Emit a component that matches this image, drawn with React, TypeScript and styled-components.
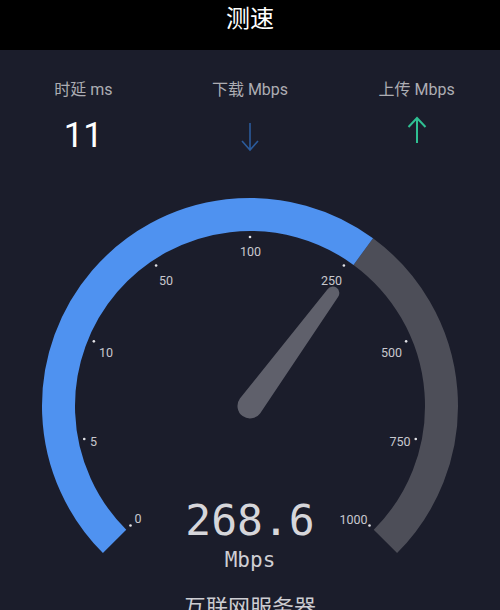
import React from "react";
import styled, { createGlobalStyle } from "styled-components";

const GlobalStyle = createGlobalStyle`
    html, body {
        margin: 0;
        padding: 0;
        background: #1b1d2b;
        overflow: hidden;
    }
    body {
        font-family: Roboto, "Noto Sans CJK SC", sans-serif;
    }
`;

const Screen = styled.div`
    width: 500px;
    height: 610px;
    display: flex;
    flex-direction: column;
    background: #1b1d2b;
    overflow: hidden;
`;

const Header = styled.div`
    height: 50px;
    flex-shrink: 0;
    background: #000;
    color: #fff;
    font-family: "Noto Sans CJK SC", sans-serif;
    font-size: 24px;
    line-height: 34px;
    text-align: center;
`;

const Stats = styled.div`
    display: grid;
    grid-template-columns: 1fr 1fr 1fr;
    padding-top: 30px;
`;

const Stat = styled.div`
    display: flex;
    flex-direction: column;
    align-items: center;
    gap: 16px;
`;

const StatLabel = styled.div`
    font-size: 16px;
    line-height: 20px;
    color: #adadb3;
    white-space: nowrap;
`;

const StatValue = styled.div`
    height: 40px;
    font-size: 35px;
    line-height: 40px;
    font-weight: 400;
    color: #fff;
`;

const ArrowIcon = styled.svg`
    display: block;
    width: 24px;
    height: 40px;
`;

const Gauge = styled.div`
    position: relative;
    height: 434px;
    flex-shrink: 0;
`;

const Dial = styled.svg`
    display: block;
    width: 500px;
    height: 434px;
`;

const Readout = styled.div`
    position: absolute;
    top: 343px;
    left: 0;
    right: 0;
    display: flex;
    flex-direction: column;
    align-items: center;
    font-family: "DejaVu Sans Mono", monospace;
    color: #d6d6da;
`;

const Speed = styled.div`
    font-size: 43px;
    line-height: 43px;
`;

const Unit = styled.div`
    margin-top: 8px;
    font-size: 21px;
    line-height: 21px;
    color: #cfcfd4;
`;

const Server = styled.div`
    text-align: center;
    font-family: "Noto Sans CJK SC", sans-serif;
    font-size: 22px;
    line-height: 30px;
    color: #cdcdd2;
`;

const CX = 250;
const CY = 250;
const R = 191.5;
const STOPS = [0, 5, 10, 50, 100, 250, 500, 750, 1000];
const STEP = 270 / 8;

const LABELS = [
    { text: "0", x: 138, y: 367 },
    { text: "5", x: 93.5, y: 290 },
    { text: "10", x: 106, y: 201 },
    { text: "50", x: 166, y: 128.5 },
    { text: "100", x: 250.5, y: 100 },
    { text: "250", x: 331.5, y: 128.5 },
    { text: "500", x: 391.5, y: 201 },
    { text: "750", x: 400, y: 290 },
    { text: "1000", x: 353.5, y: 367.5 },
];

function point(deg: number, r: number) {
    const a = (deg * Math.PI) / 180;
    return { x: CX + r * Math.sin(a), y: CY - r * Math.cos(a) };
}

function arc(from: number, to: number) {
    const a = point(from, R);
    const b = point(to, R);
    const large = to - from > 180 ? 1 : 0;
    return `M ${a.x} ${a.y} A ${R} ${R} 0 ${large} 1 ${b.x} ${b.y}`;
}

function valueToAngle(v: number) {
    for (let i = 0; i < STOPS.length - 1; i++) {
        if (v <= STOPS[i + 1]) {
            const frac = (v - STOPS[i]) / (STOPS[i + 1] - STOPS[i]);
            return -135 + (i + frac) * STEP;
        }
    }
    return 135;
}

function needlePath(deg: number) {
    const a = (deg * Math.PI) / 180;
    const u = { x: Math.sin(a), y: -Math.cos(a) };
    const n = { x: Math.cos(a), y: Math.sin(a) };
    const r1 = 12.5;
    const r2 = 6.5;
    const len = 140;
    const tip = { x: CX + u.x * len, y: CY + u.y * len };
    const p1 = { x: CX + n.x * r1, y: CY + n.y * r1 };
    const p2 = { x: tip.x + n.x * r2, y: tip.y + n.y * r2 };
    const p3 = { x: tip.x - n.x * r2, y: tip.y - n.y * r2 };
    const p4 = { x: CX - n.x * r1, y: CY - n.y * r1 };
    return `M ${p1.x} ${p1.y} L ${p2.x} ${p2.y} A ${r2} ${r2} 0 0 0 ${p3.x} ${p3.y} L ${p4.x} ${p4.y} A ${r1} ${r1} 0 0 0 ${p1.x} ${p1.y} Z`;
}

function Arrow({ dir, color }: { dir: "up" | "down"; color: string }) {
    return (
        <ArrowIcon viewBox="0 0 24 40">
            {dir === "down" ? (
                <path d="M12 7 V34 M4 25 L12 34 L20 25" fill="none" stroke={color} strokeWidth="1.6" />
            ) : (
                <path d="M12 2 V27 M3.5 11 L12 2 L20.5 11" fill="none" stroke={color} strokeWidth="2" />
            )}
        </ArrowIcon>
    );
}

function SpeedDial({ value }: { value: number }) {
    const angle = valueToAngle(value);

    return (
        <Dial viewBox="0 0 500 434">
            <path d={arc(angle, 135)} fill="none" stroke="#4d4e58" strokeWidth="33" />
            <path d={arc(-135, angle)} fill="none" stroke="#4f92f0" strokeWidth="33" />
            {STOPS.map((_, i) => {
                const p = point(-135 + i * STEP, 169);
                return <circle key={i} cx={p.x} cy={p.y} r="1.3" fill="#e2e2e6" />;
            })}
            {LABELS.map(l => (
                <text
                    key={l.text}
                    x={l.x}
                    y={l.y}
                    textAnchor="middle"
                    fontFamily="Roboto, sans-serif"
                    fontSize="12.5"
                    fill="#c8c8ce">
                    {l.text}
                </text>
            ))}
            <path d={needlePath(angle)} fill="#5f606b" />
        </Dial>
    );
}

export default function App() {
    const speed = 268.6;

    return (
        <Screen>
            <GlobalStyle />
            <Header>测速</Header>
            <Stats>
                <Stat>
                    <StatLabel>时延 ms</StatLabel>
                    <StatValue>11</StatValue>
                </Stat>
                <Stat>
                    <StatLabel>下载 Mbps</StatLabel>
                    <Arrow dir="down" color="#2b5b9b" />
                </Stat>
                <Stat>
                    <StatLabel>上传 Mbps</StatLabel>
                    <Arrow dir="up" color="#2fbf92" />
                </Stat>
            </Stats>
            <Gauge>
                <SpeedDial value={speed} />
                <Readout>
                    <Speed>{speed.toFixed(1)}</Speed>
                    <Unit>Mbps</Unit>
                </Readout>
            </Gauge>
            <Server>互联网服务器</Server>
        </Screen>
    );
}
